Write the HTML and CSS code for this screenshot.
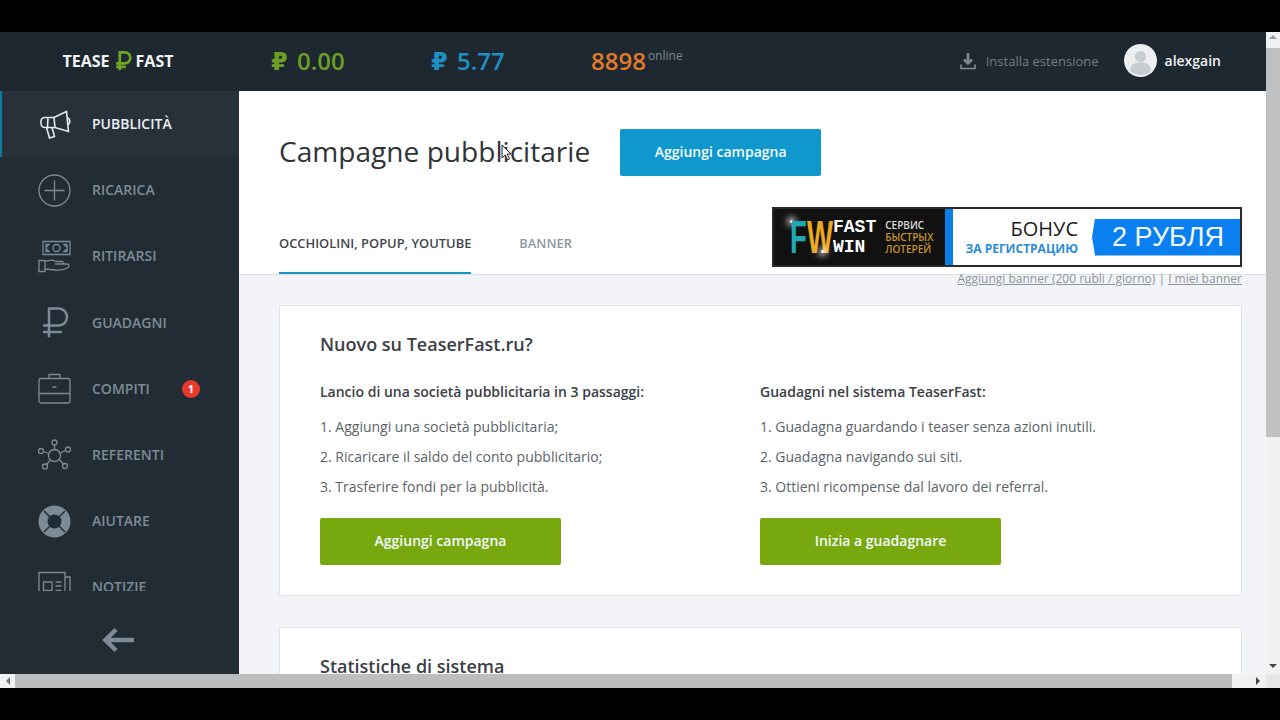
FILE: index.html
```html
<!DOCTYPE html>
<html lang="it">
<head>
    <meta charset="UTF-8">
    <title>TeaserFast</title>
    <link rel="stylesheet" href="styles.css">
</head>
<body>
<div class="screen">
    <div class="window">
        <div class="page">
            <!-- Barra superiore -->
            <header class="topbar">
                <div class="logo">
                    <span>TEASE</span>
                    <svg class="logo-rub" viewBox="0 0 18 24"><path d="M5.5 22V2.500H11a6 6 0 0 1 0 12H1.500M1.500 18.500H12"/></svg>
                    <span>FAST</span>
                </div>
                <div class="balances">
                    <div class="balance balance-green">₽ 0.00</div>
                    <div class="balance balance-blue">₽ 5.77</div>
                    <div class="online"><span class="online-num">8898</span><span class="online-label">online</span></div>
                </div>
                <div class="top-right">
                    <a class="install">
                        <svg class="install-icon" viewBox="0 0 16 18"><path d="M8 1v10M4 7.500l4 4 4-4" fill="none" stroke-width="2.600"/><path d="M1 12.500v4h14v-4" fill="none" stroke-width="1.600"/></svg>
                        Installa estensione
                    </a>
                    <div class="avatar">
                        <svg viewBox="0 0 33 33"><circle cx="16.500" cy="12.500" r="5.500"/><path d="M6 27c0-6 4-8.500 10.500-8.500S27 21 27 27c-3 2.500-7 4-10.500 4S9 29.500 6 27z"/></svg>
                    </div>
                    <span class="username">alexgain</span>
                </div>
            </header>

            <div class="body-row">
                <!-- Menu laterale -->
                <aside class="sidebar">
                    <nav class="menu">
                        <a class="menu-item active">
                            <svg class="menu-icon" viewBox="0 0 33 33"><path d="M7 9.500h9L28.500 3.500l2 20L17 19.500H7a4 4 0 0 1-4-4v-2a4 4 0 0 1 3.500-4zM16 9.500l1 10M10 9.500l-.5 10M8.500 19.500l3 10.500 5-1.500-2.500-9M30 10c2 .5 2.500 5 .5 6.500"/></svg>
                            <span>Pubblicità</span>
                        </a>
                        <a class="menu-item">
                            <svg class="menu-icon" viewBox="0 0 33 33"><circle cx="16.500" cy="16.500" r="15.500"/><path d="M16.500 6.500v20M6.500 16.500h20"/></svg>
                            <span>Ricarica</span>
                        </a>
                        <a class="menu-item">
                            <svg class="menu-icon" viewBox="0 0 33 33"><path d="M5 1.500h27v13H5zM8 4.500h3l-3 3zM29 4.500h-3l3 3zM8 11.500h3l-3-3zM29 11.500h-3l3-3z"/><circle cx="18.500" cy="8" r="3.500"/><path d="M1 20.500h6v11H1zM7 22c4-2.500 7-2.500 11-.5h6c1.500 0 1.500 2.500 0 2.500h-7 12c2.500 0 2.500 2.500 1 3.500-4 2.500-9 3-13 2.500l-10-1"/></svg>
                            <span>Ritirarsi</span>
                        </a>
                        <a class="menu-item">
                            <svg class="menu-icon menu-icon-heavy" viewBox="0 0 33 33"><path d="M11 31.500V2.500h9.500a8.500 8.500 0 0 1 0 17H5M5 26h19"/></svg>
                            <span>Guadagni</span>
                        </a>
                        <a class="menu-item">
                            <svg class="menu-icon" viewBox="0 0 33 33"><rect x="1" y="6.500" width="31" height="24.500" rx="2"/><path d="M11 6.500V2.500h11v4M1 21.500h31M14.500 15h4"/></svg>
                            <span>Compiti</span>
                            <em class="badge">1</em>
                        </a>
                        <a class="menu-item">
                            <svg class="menu-icon" viewBox="0 0 33 33"><circle cx="16.500" cy="16.500" r="6"/><circle cx="16.500" cy="3.500" r="2.500"/><circle cx="3" cy="12" r="2.500"/><circle cx="30" cy="10.500" r="2.500"/><circle cx="7" cy="27.500" r="2.500"/><circle cx="27" cy="27" r="2.500"/><path d="M16.500 6v4.500M5.500 12.500l5.500 2M27.800 11.500l-6 2.500M8.500 25.500l4-4.500M25.500 25l-4.500-4.500"/></svg>
                            <span>Referenti</span>
                        </a>
                        <a class="menu-item">
                            <svg class="menu-icon menu-icon-buoy" viewBox="0 0 33 33"><circle cx="16.500" cy="16.500" r="11.500"/><path class="buoy-cut" d="M6 6l6 6M27 6l-6 6M6 27l6-6M27 27l-6-6"/></svg>
                            <span>Aiutare</span>
                        </a>
                        <a class="menu-item">
                            <svg class="menu-icon" viewBox="0 0 33 33"><path d="M1 33V1.500h26V33M27 6h5v27M5.500 11h8.500v8.500H5.500zM17.500 11h6M17.500 15h6M17.500 19.500h6M5.500 24.500h18"/></svg>
                            <span>Notizie</span>
                        </a>
                    </nav>
                    <div class="collapse">
                        <svg viewBox="0 0 34 26"><path d="M32 13H4M14 2.500L3.500 13 14 23.500"/></svg>
                    </div>
                </aside>

                <!-- Contenuto -->
                <main class="content">
                    <div class="content-top">
                        <div class="title-row">
                            <h1>Campagne pubblicitarie</h1>
                            <a class="btn btn-blue">Aggiungi campagna</a>
                        </div>
                        <div class="tabs-row">
                            <div class="tabs">
                                <a class="tab tab-active">OCCHIOLINI, POPUP, YOUTUBE</a>
                                <a class="tab">BANNER</a>
                            </div>
                            <div class="promo">
                                <div class="promo-dark">
                                    <div class="promo-logo"><span class="fw-f">F</span><span class="fw-w">W</span></div>
                                    <div class="promo-name">FAST<br>WIN</div>
                                    <div class="promo-sub">СЕРВИС<br><b>БЫСТРЫХ<br>ЛОТЕРЕЙ</b></div>
                                </div>
                                <div class="promo-light">
                                    <div class="promo-bonus">БОНУС<small>ЗА РЕГИСТРАЦИЮ</small></div>
                                    <div class="promo-flag">2 РУБЛЯ</div>
                                </div>
                            </div>
                        </div>
                    </div>
                    <div class="content-bottom">
                        <div class="banner-links"><a>Aggiungi banner (200 rubli / giorno)</a> | <a>I miei banner</a></div>
                        <section class="card">
                            <h2>Nuovo su TeaserFast.ru?</h2>
                            <div class="card-cols">
                                <div class="card-col">
                                    <h3>Lancio di una società pubblicitaria in 3 passaggi:</h3>
                                    <p>1. Aggiungi una società pubblicitaria;</p>
                                    <p>2. Ricaricare il saldo del conto pubblicitario;</p>
                                    <p>3. Trasferire fondi per la pubblicità.</p>
                                    <a class="btn btn-green">Aggiungi campagna</a>
                                </div>
                                <div class="card-col">
                                    <h3>Guadagni nel sistema TeaserFast:</h3>
                                    <p>1. Guadagna guardando i teaser senza azioni inutili.</p>
                                    <p>2. Guadagna navigando sui siti.</p>
                                    <p>3. Ottieni ricompense dal lavoro dei referral.</p>
                                    <a class="btn btn-green">Inizia a guadagnare</a>
                                </div>
                            </div>
                        </section>
                        <section class="card">
                            <h2>Statistiche di sistema</h2>
                        </section>
                    </div>
                    <!-- Puntatore del mouse -->
                    <svg class="cursor" viewBox="0 0 12 18"><path d="M1 1v13l3.200-3 2.300 5 2-1-2.300-5H10z"/></svg>
                </main>
            </div>
        </div>

        <!-- Barra verticale -->
        <div class="vscroll">
            <i class="arrow-up"></i>
            <div class="vscroll-thumb"></div>
            <i class="arrow-down"></i>
        </div>
    </div>

    <!-- Barra orizzontale -->
    <div class="hscroll">
        <div class="hscroll-left"><i class="arrow-left"></i></div>
        <div class="hscroll-thumb"></div>
        <div class="hscroll-right"><i class="arrow-right"></i></div>
        <div class="hscroll-corner"></div>
    </div>
</div>
</body>
</html>
```

FILE: styles.css
```css
/* General */
* {
    box-sizing: border-box;
}

body {
    margin: 0;
    height: 720px;
    padding-top: 32px;
    overflow: hidden;
    background-color: #000;
    font-family: "Open Sans", "DejaVu Sans", sans-serif;
    color: #3c4248;
}

.screen {
    height: 656px;
    display: flex;
    flex-direction: column;
}

.window {
    flex: 1;
    min-height: 0;
    display: flex;
}

.page {
    flex: 1;
    min-width: 0;
    display: flex;
    flex-direction: column;
}

/* Top bar */
.topbar {
    height: 59px;
    flex: none;
    display: flex;
    align-items: center;
    padding-bottom: 2px;
    background-color: #1e2830;
}

.logo {
    width: 239px;
    flex: none;
    display: flex;
    justify-content: center;
    align-items: center;
    gap: 4px;
    padding-right: 3px;
    font-size: 16px;
    font-weight: 700;
    color: #f2f4f5;
}

.logo-rub {
    width: 18px;
    height: 22px;
    fill: none;
    stroke: #6ea524;
    stroke-width: 3;
}

.balances {
    display: flex;
    align-items: center;
    padding-left: 32px;
}

.balance {
    width: 160px;
    font-size: 24px;
    font-weight: 600;
    word-spacing: 3px;
    white-space: nowrap;
}

.balance-green {
    color: #6d9f24;
}

.balance-blue {
    color: #1f8fc4;
}

.online {
    display: flex;
    align-items: flex-start;
    gap: 2px;
}

.online-num {
    font-size: 24px;
    font-weight: 600;
    color: #e47a28;
}

.online-label {
    font-size: 12px;
    line-height: 24px;
    color: #7c868e;
}

.top-right {
    margin-left: auto;
    display: flex;
    align-items: center;
    padding-right: 45px;
}

.install {
    display: flex;
    align-items: center;
    gap: 10px;
    font-size: 13px;
    color: #737d85;
}

.install-icon {
    width: 16px;
    height: 18px;
    stroke: #7f8a92;
}

.avatar {
    width: 33px;
    height: 33px;
    margin-left: 25px;
    border-radius: 50%;
    overflow: hidden;
    background-color: #eceef0;
}

.avatar svg {
    display: block;
    fill: #c7ccd1;
}

.username {
    margin-left: 8px;
    font-size: 14px;
    font-weight: 600;
    color: #eef1f3;
}

.body-row {
    flex: 1;
    min-height: 0;
    display: flex;
}

/* Sidebar */
.sidebar {
    width: 239px;
    flex: none;
    display: flex;
    flex-direction: column;
    background-color: #222c34;
}

.menu {
    height: 500px;
    flex: none;
    overflow: hidden;
}

.menu-item {
    height: 66.200px;
    display: flex;
    align-items: center;
    padding-left: 38px;
    font-size: 14px;
    font-weight: 600;
    text-transform: uppercase;
    color: #7d8b96;
}

.menu-item span {
    margin-left: 21px;
    padding-bottom: 1px;
}

.menu-item.active {
    background-color: #26313a;
    border-left: 2px solid #0f7a9e;
    padding-left: 36px;
    color: #eef1f3;
}

.menu-icon {
    width: 33px;
    height: 33px;
    flex: none;
    fill: none;
    stroke: currentColor;
    stroke-width: 1.300;
}

.menu-item.active .menu-icon {
    stroke: #e8ebed;
    stroke-width: 1.600;
}

.menu-icon-heavy {
    stroke-width: 2.500;
}

.menu-icon-buoy {
    stroke-width: 9;
}

.menu-icon-buoy .buoy-cut {
    stroke: #222c34;
    stroke-width: 1.500;
}

.badge {
    width: 18px;
    height: 18px;
    margin-left: 32px;
    display: flex;
    align-items: center;
    justify-content: center;
    border-radius: 50%;
    background-color: #e8392f;
    font-size: 11px;
    font-style: normal;
    font-weight: 700;
    color: #fff;
}

.collapse {
    flex: 1;
    display: flex;
    justify-content: center;
    padding: 36px 2px 0 0;
}

.collapse svg {
    width: 34px;
    height: 26px;
    fill: none;
    stroke: #7d8b96;
    stroke-width: 4.500;
}

/* Main content */
.content {
    position: relative;
    flex: 1;
    min-width: 0;
    overflow: hidden;
    display: flex;
    flex-direction: column;
    background-color: #f3f4f8;
}

.content-top {
    flex: none;
    padding: 38px 24px 0 40px;
    background-color: #fff;
    border-bottom: 1px solid #dcdfe4;
}

.title-row {
    display: flex;
    align-items: center;
    gap: 30px;
    margin-bottom: 31px;
}

h1 {
    margin: 0 0 3px;
    font-size: 28.100px;
    font-weight: 400;
    color: #2f3439;
}

.btn {
    height: 47px;
    display: flex;
    align-items: center;
    justify-content: center;
    padding-bottom: 3px;
    border-radius: 2px;
    font-size: 14px;
    font-weight: 600;
    color: #f4fafc;
}

.btn-blue {
    width: 201px;
    background-color: #0f98cd;
}

.btn-green {
    width: 241px;
    margin-top: 16px;
    background-color: #77a90f;
}

.tabs-row {
    height: 67px;
    display: flex;
    justify-content: space-between;
}

.tabs {
    display: flex;
    gap: 48px;
}

.tab {
    height: 67px;
    padding-top: 27px;
    font-size: 12.900px;
    font-weight: 600;
    color: #8f979e;
}

.tab-active {
    color: #3f454b;
    border-bottom: 2px solid #1a93bd;
}

/* Fake ad banner */
.promo {
    width: 470px;
    height: 60px;
    display: flex;
    border: 2px solid #2a2a2a;
    background-color: #fff;
}

.promo-dark {
    width: 179px;
    flex: none;
    display: flex;
    align-items: center;
    padding-left: 16px;
    background-color: #111;
    border-right: 8px solid #0a7fe6;
}

.promo-logo {
    position: relative;
    width: 43px;
    height: 34px;
    flex: none;
    display: flex;
    font-family: "Liberation Sans", sans-serif;
    font-size: 46px;
    font-weight: 700;
    line-height: 34px;
}

.promo-logo::before,
.promo-logo::after {
    content: "";
    position: absolute;
    width: 3px;
    height: 3px;
    border-radius: 50%;
    background-color: #fff;
    box-shadow: 0 0 6px 3px rgba(255, 255, 255, 0.7);
}

.promo-logo::before {
    left: 0;
    top: 0;
}

.promo-logo::after {
    left: 31px;
    top: 30px;
}

.fw-f {
    width: 17px;
    transform: scaleX(0.6);
    transform-origin: left;
    color: #1ea8b4;
}

.fw-w {
    width: 26px;
    transform: scaleX(0.6);
    transform-origin: left;
    color: #eca91c;
}

.promo-name {
    font-family: "Liberation Mono", monospace;
    font-size: 18px;
    font-weight: 700;
    line-height: 20px;
    color: #fff;
}

.promo-sub {
    margin-left: 9px;
    font-size: 10px;
    font-weight: 600;
    line-height: 12px;
    white-space: nowrap;
    color: #ddd;
}

.promo-sub b {
    font-weight: 600;
    color: #c8922c;
}

.promo-light {
    flex: 1;
    display: flex;
    align-items: center;
    justify-content: flex-end;
    gap: 14px;
}

.promo-bonus {
    text-align: right;
    font-size: 20px;
    line-height: 24px;
    color: #1b1b1b;
}

.promo-bonus small {
    display: block;
    font-size: 12px;
    font-weight: 700;
    line-height: 16px;
    color: #2d8ad6;
}

.promo-flag {
    width: 148px;
    height: 37px;
    display: flex;
    align-items: center;
    justify-content: center;
    padding-left: 4px;
    clip-path: polygon(3px 0, 100% 0, 100% 100%, 3px 100%, 0 50%);
    background-color: #0a80f0;
    font-family: "Liberation Sans", sans-serif;
    font-size: 27px;
    color: #f4f9ff;
}

.content-bottom {
    flex: 1;
    padding: 0 24px 0 40px;
}

.banner-links {
    margin-top: -4px;
    margin-bottom: 18px;
    text-align: right;
    font-size: 12px;
    line-height: 16px;
    color: #8c949b;
}

.banner-links a {
    text-decoration: underline;
}

.card {
    padding: 23px 40px 30px;
    margin-bottom: 31px;
    background-color: #fff;
    border: 1px solid #e1e4e9;
    border-radius: 2px;
}

h2 {
    margin: 0 0 23px;
    font-size: 18px;
    font-weight: 600;
    line-height: 30px;
    color: #3a4046;
}

.card-cols {
    display: grid;
    grid-template-columns: 440px 1fr;
}

h3 {
    margin: 0 0 10px;
    font-size: 14px;
    font-weight: 600;
    line-height: 20px;
    color: #3a4046;
}

.card-col p {
    margin: 0;
    font-size: 14px;
    line-height: 30px;
    color: #5c6369;
}

.cursor {
    position: absolute;
    left: 262px;
    top: 53px;
    width: 12px;
    height: 18px;
    fill: #f5f5f5;
    stroke: #222;
    stroke-width: 1;
}

/* Scrollbars */
.vscroll {
    width: 14px;
    flex: none;
    display: flex;
    flex-direction: column;
    align-items: center;
    background-color: #f1f1f1;
}

.vscroll-thumb {
    width: 14px;
    height: 389px;
    margin-top: 9px;
    background-color: #c1c1c1;
}

.arrow-up,
.arrow-down,
.arrow-left,
.arrow-right {
    display: block;
    width: 0;
    height: 0;
    border: 4px solid transparent;
}

.arrow-up {
    margin-top: 3px;
    border-top: 0;
    border-bottom-color: #9a9a9a;
}

.arrow-down {
    margin-top: auto;
    margin-bottom: 6px;
    border-bottom: 0;
    border-top-color: #444;
}

.hscroll {
    height: 14px;
    flex: none;
    display: flex;
    background-color: #f1f1f1;
}

.hscroll-left {
    width: 15px;
    display: flex;
    align-items: center;
    justify-content: center;
}

.arrow-left {
    border-left: 0;
    border-right-color: #777;
}

.hscroll-thumb {
    width: 1217px;
    background-color: #bdbdbd;
}

.hscroll-right {
    width: 34px;
    display: flex;
    align-items: center;
    justify-content: flex-end;
    padding-right: 6px;
}

.arrow-right {
    border-right: 0;
    border-left-color: #444;
}

.hscroll-corner {
    width: 14px;
    background-color: #e6e6e6;
}
```
